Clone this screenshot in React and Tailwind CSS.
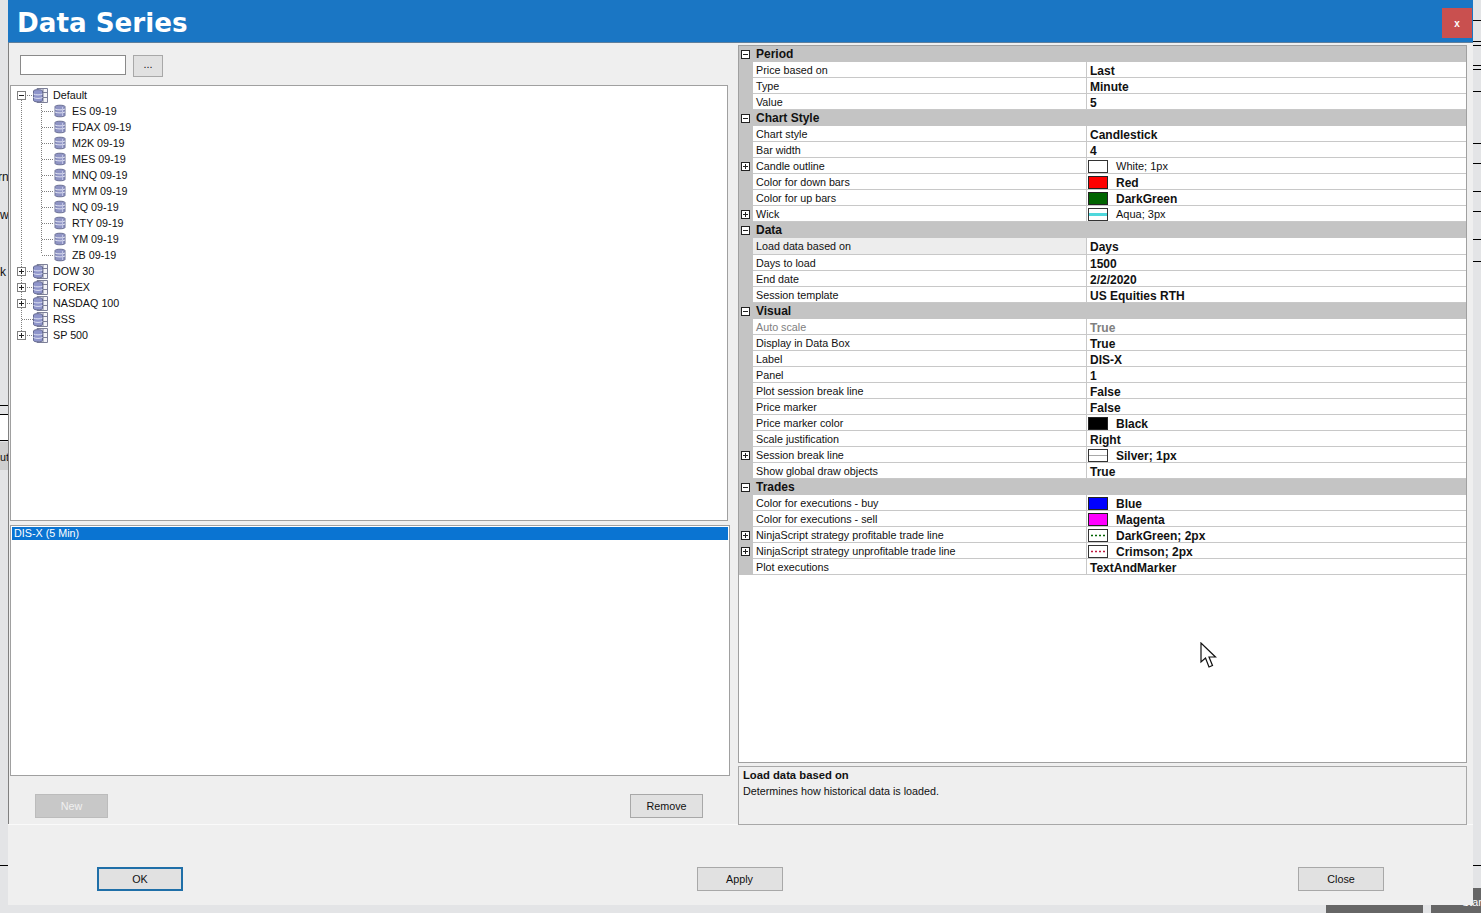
const sections = [
  {
    title: "Period",
    rows: [
      { name: "Price based on", value: "Last" },
      { name: "Type", value: "Minute" },
      { name: "Value", value: "5" },
    ],
  },
  {
    title: "Chart Style",
    rows: [
      { name: "Chart style", value: "Candlestick" },
      { name: "Bar width", value: "4" },
      { name: "Candle outline", value: "White; 1px", swatch: "white", plus: true, thin: true },
      { name: "Color for down bars", value: "Red", swatch: "#ff0000" },
      { name: "Color for up bars", value: "DarkGreen", swatch: "#006400" },
      { name: "Wick", value: "Aqua; 3px", swatch: "aqua", plus: true, thin: true },
    ],
  },
  {
    title: "Data",
    rows: [
      { name: "Load data based on", value: "Days", tall: true, selected: true },
      { name: "Days to load", value: "1500" },
      { name: "End date", value: "2/2/2020" },
      { name: "Session template", value: "US Equities RTH" },
    ],
  },
  {
    title: "Visual",
    rows: [
      { name: "Auto scale", value: "True", muted: true },
      { name: "Display in Data Box", value: "True" },
      { name: "Label", value: "DIS-X" },
      { name: "Panel", value: "1" },
      { name: "Plot session break line", value: "False" },
      { name: "Price marker", value: "False" },
      { name: "Price marker color", value: "Black", swatch: "#000000" },
      { name: "Scale justification", value: "Right" },
      { name: "Session break line", value: "Silver; 1px", swatch: "silver", plus: true },
      { name: "Show global draw objects", value: "True" },
    ],
  },
  {
    title: "Trades",
    rows: [
      { name: "Color for executions - buy", value: "Blue", swatch: "#0000ff" },
      { name: "Color for executions - sell", value: "Magenta", swatch: "#ff00ff" },
      { name: "NinjaScript strategy profitable trade line", value: "DarkGreen; 2px", swatch: "dotgreen", plus: true },
      { name: "NinjaScript strategy unprofitable trade line", value: "Crimson; 2px", swatch: "dotred", plus: true },
      { name: "Plot executions", value: "TextAndMarker" },
    ],
  },
];

const instruments = ["ES 09-19", "FDAX 09-19", "M2K 09-19", "MES 09-19", "MNQ 09-19", "MYM 09-19", "NQ 09-19", "RTY 09-19", "YM 09-19", "ZB 09-19"];
const groups = [
  { name: "DOW 30", plus: true },
  { name: "FOREX", plus: true },
  { name: "NASDAQ 100", plus: true },
  { name: "RSS" },
  { name: "SP 500", plus: true },
];
const rightTicks = [20, 41, 45, 65, 69, 91, 143, 163, 191, 211, 239, 261];

const Expander = ({ plus, color = "#808080" }) => (
  <svg width="9" height="9" viewBox="0 0 9 9" className="block shrink-0">
    <rect x="0.5" y="0.5" width="8" height="8" fill="white" stroke={color} />
    <path d="M2 4.5H7" stroke="#222" />
    {plus && <path d="M4.5 2V7" stroke="#222" />}
  </svg>
);

const Cylinder = () => (
  <svg width="12" height="14" viewBox="0 0 12 14" className="block shrink-0">
    <path d="M1 2.5C1 .8 11 .8 11 2.5V11.5C11 13.2 1 13.2 1 11.5Z" fill="#8f94c4" stroke="#6d7296" />
    <path d="M1 5C3 6.2 9 6.2 11 5M1 8C3 9.2 9 9.2 11 8" fill="none" stroke="#dfe1f1" />
    <path d="M8.5 3V12" stroke="#c1c4e2" />
  </svg>
);

const Database = () => (
  <svg width="15" height="15" viewBox="0 0 15 15" className="block shrink-0">
    <path d="M4 .5H14.5V14.5H4Z" fill="#f3f3f8" stroke="#7d8098" />
    <path d="M4 4.5H14.5M4 9.5H14.5M10 .5V14.5" stroke="#7d8098" />
    <path d="M.5 3C.5 1.2 9.5 1.2 9.5 3V12.5C9.5 14.3 .5 14.3 .5 12.5Z" fill="#8f95cb" stroke="#666b92" />
    <path d="M.5 6C2.5 7.2 7.5 7.2 9.5 6M.5 9.5C2.5 10.7 7.5 10.7 9.5 9.5" fill="none" stroke="#dfe2f3" />
  </svg>
);

const TreeLines = () => (
  <svg width="60" height="270" className="absolute left-0 top-0" stroke="#808080" strokeDasharray="1 1" fill="none">
    <path d="M10.5 14V250" />
    <path d="M30.5 16V168" />
    <path d="M16 9.5H22" />
    {instruments.map((item, i) => (
      <path key={item} d={`M31 ${25.5 + i * 16}H42`} />
    ))}
    {groups.map((group, i) => (
      <path key={group.name} d={`M${group.plus ? 16 : 11} ${185.5 + i * 16}H22`} />
    ))}
  </svg>
);

const Tree = () => (
  <div className="relative h-[436px] border border-[#a0a0a0] bg-white pt-px text-[10.75px] text-[#111]">
    <TreeLines />
    <div className="relative flex h-4 items-center">
      <div className="ml-[6px]"><Expander /></div>
      <div className="ml-[7px]"><Database /></div>
      <span className="ml-[5px]">Default</span>
    </div>
    {instruments.map((item) => (
      <div key={item} className="relative flex h-4 items-center pl-[43px]">
        <Cylinder />
        <span className="ml-[6px]">{item}</span>
      </div>
    ))}
    {groups.map((group) => (
      <div key={group.name} className="relative flex h-4 items-center">
        <div className="ml-[6px] w-[9px]">{group.plus && <Expander plus />}</div>
        <div className="ml-[7px]"><Database /></div>
        <span className="ml-[5px]">{group.name}</span>
      </div>
    ))}
  </div>
);

const Swatch = ({ kind }) => {
  const solid = !["aqua", "silver", "dotgreen", "dotred"].includes(kind);
  return (
    <svg width="20" height="13" viewBox="0 0 20 13" className="block shrink-0">
      <rect x="0.5" y="0.5" width="19" height="12" fill={solid ? kind : "white"} stroke={kind === "white" || !solid ? "#333" : "#222"} />
      {kind === "aqua" && <rect x="1" y="5" width="18" height="3" fill="#4fd8dc" />}
      {kind === "silver" && <rect x="1" y="6" width="18" height="1" fill="#a8a8a8" />}
      {kind === "dotgreen" && <path d="M3 6.5H18" stroke="#006400" strokeWidth="1.4" strokeDasharray="2 2" />}
      {kind === "dotred" && <path d="M3 6.5H18" stroke="#c01840" strokeWidth="1.4" strokeDasharray="2 2" />}
    </svg>
  );
};

const GridRow = ({ row }) => (
  <div className={`flex ${row.tall ? "h-[17px]" : "h-4"}`}>
    <div className="flex w-[14px] shrink-0 items-center bg-[#c4c4c4] pl-[2px]">
      {row.plus && <Expander plus color="#222" />}
    </div>
    <div className={`flex w-[333px] shrink-0 items-center border-b border-[#c8c8c8] pl-[3px] text-[10.75px] ${row.muted ? "text-[#808080]" : "text-[#111]"} ${row.selected ? "bg-[#ededed]" : ""}`}>
      <span className={row.tall ? "" : "pt-[2px]"}>{row.name}</span>
    </div>
    <div className={`flex flex-1 items-center border-b border-l border-[#c8c8c8] pl-[3px] ${row.muted ? "text-[#808080]" : "text-[#111]"} ${row.thin ? "text-[11px]" : "text-[12px] font-bold"}`}>
      {row.swatch && <div className="mr-2 -ml-[2px] pt-[2px]"><Swatch kind={row.swatch} /></div>}
      <span className="pt-[2px]">{row.value}</span>
    </div>
  </div>
);

const Section = ({ section }) => (
  <div>
    <div className="flex h-4 items-center bg-[#c4c4c4]">
      <div className="ml-[2px] mr-[6px]"><Expander color="#222" /></div>
      <span className="text-[12px] font-bold text-[#111]">{section.title}</span>
    </div>
    {section.rows.map((row) => (
      <GridRow key={row.name} row={row} />
    ))}
  </div>
);

const WinButton = ({ children, className = "border border-[#a8a8a8] bg-[#e1e1e1] text-[#111]" , size = "w-[73px]" }) => (
  <button className={`flex h-6 items-center justify-center text-[10.75px] ${size} ${className}`}>
    {children}
  </button>
);

const Backdrop = () => (
  <div className="absolute inset-0 text-[12px] text-[#111]">
    <span className="absolute -left-[2px] top-[168px]">rn</span>
    <span className="absolute left-0 top-[206px]">w</span>
    <span className="absolute left-0 top-[263px]">k</span>
    <div className="absolute left-0 top-[405px] h-px w-2 bg-black" />
    <div className="absolute left-0 top-[414px] h-[27px] w-2 border-t border-b border-black bg-white" />
    <div className="absolute left-0 top-[442px] h-[28px] w-2 overflow-hidden whitespace-nowrap bg-[#cfcfcf] pt-[9px] text-[10.75px] leading-[12px]">ut</div>
    <div className="absolute left-0 top-[865px] h-px w-2 bg-black" />
    {rightTicks.map((y) => (
      <div key={y} className="absolute left-[1473px] h-px w-2 bg-black" style={{ top: y }} />
    ))}
    <div className="absolute left-[1473px] top-[865px] h-px w-2 bg-black" />
    <div className="absolute left-[1326px] top-[900px] h-[13px] w-[97px] bg-[#666]" />
    <div className="absolute left-[1431px] top-[888px] h-[25px] w-[50px] overflow-hidden bg-[#666] pl-[31px] pt-[6px] text-[10.75px] text-white">Star</div>
  </div>
);

const Cursor = () => (
  <svg width="18" height="27" viewBox="0 0 18 27" className="absolute left-[1200px] top-[642px]">
    <path d="M1 1V20L5.5 16L9 25L12.5 23.5L9 15H15.5Z" fill="white" stroke="#111" strokeWidth="1.2" strokeLinejoin="miter" />
  </svg>
);

export default function App() {
  return (
    <div className="relative h-[913px] w-[1481px] overflow-hidden bg-[#e3e4e6] font-['Liberation_Sans',Arial,sans-serif] text-[10.75px]">
      <Backdrop />
      <div className="relative ml-2 flex h-[905px] w-[1465px] flex-col bg-[#efefef]">
        <div className="flex h-[43px] shrink-0 items-start justify-between border-b border-[#5f7f9c] bg-[#1a76c4] pl-[9px] pr-px">
          <h1 className="pt-[5px] font-['DejaVu_Sans',Verdana,sans-serif] text-[26.2px] leading-[36px] font-bold text-white">Data Series</h1>
          <button className="mt-2 flex h-[30px] w-[30px] items-center justify-center bg-[#c9504f] text-[10px] font-bold text-white">x</button>
        </div>

        <div className="flex h-[782px] shrink-0 border-b border-[#fafafa]">
          <div className="flex w-[730px] shrink-0 flex-col border-l border-[#808080] pl-px">
            <div className="flex h-[42px] shrink-0 items-start gap-[7px] pl-[10px] pt-[12px]">
              <div className="h-5 w-[106px] border border-[#8a8a8a] bg-white" />
              <WinButton size="h-[22px] w-[30px] pb-1">...</WinButton>
            </div>
            <div className="mr-[10px]"><Tree /></div>
            <div className="mr-2 mt-1 h-[251px] shrink-0 border border-[#a0a0a0] bg-white p-px">
              <div className="flex h-[13px] items-center bg-[#0a74d2] pl-[2px] text-white">DIS-X (5 Min)</div>
            </div>
            <div className="flex items-start justify-between pl-[25px] pr-[35px] pt-[18px]">
              <WinButton className="border border-[#bcbcbc] bg-[#c8c8c8] text-[#f0f0f0]">New</WinButton>
              <WinButton>Remove</WinButton>
            </div>
          </div>

          <div className="flex w-[729px] shrink-0 flex-col pt-[2px]">
            <div className="h-[718px] shrink-0 border border-[#a0a0a0] bg-white">
              {sections.map((section) => (
                <Section key={section.title} section={section} />
              ))}
            </div>
            <div className="mt-[3px] h-[59px] shrink-0 border border-[#a8a8a8] bg-[#efefef] pl-1 leading-4 text-[#111]">
              <div className="text-[11.25px] font-bold">Load data based on</div>
              <div>Determines how historical data is loaded.</div>
            </div>
          </div>
        </div>

        <div className="flex flex-1 items-start justify-between px-[89px] pt-[42px]">
          <WinButton size="w-[86px]" className="border-2 border-[#1f6fa8] bg-[#e1e1e1] text-[#111]">OK</WinButton>
          <div className="mr-[2px]"><WinButton size="w-[86px]">Apply</WinButton></div>
          <WinButton size="w-[86px]">Close</WinButton>
        </div>
      </div>
      <Cursor />
    </div>
  );
}
